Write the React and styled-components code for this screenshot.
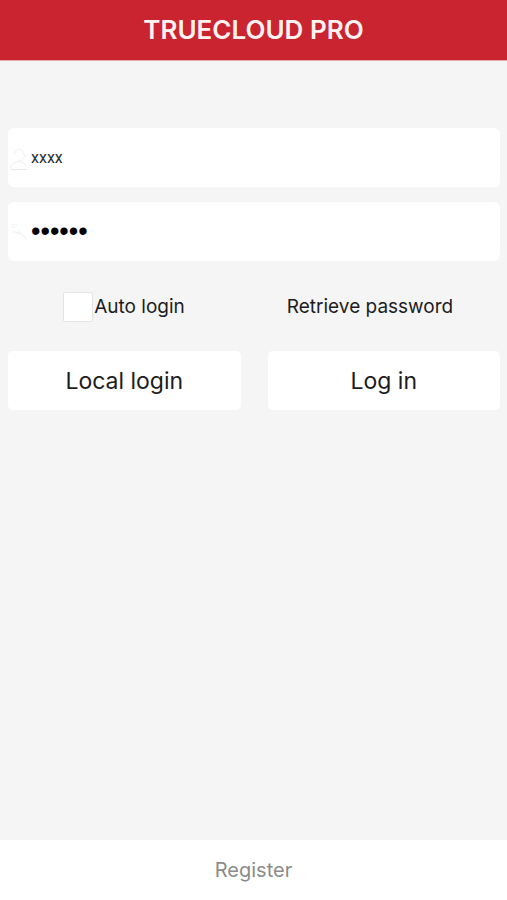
import React, { useState } from "react";
import styled, { createGlobalStyle } from "styled-components";

const GlobalStyle = createGlobalStyle`
  *, *::before, *::after { box-sizing: border-box; }
  body {
    margin: 0;
    background: #f5f5f5;
    color: #1c1c1e;
    font-family: Inter, "Liberation Sans", sans-serif;
  }
  button, input { font: inherit; color: inherit; }
`;

const Screen = styled.div`
  min-height: 100vh;
  display: flex;
  flex-direction: column;
`;

const Header = styled.header`
  height: 61px;
  display: flex;
  align-items: center;
  justify-content: center;
  background: #c92430;
  border-bottom: 1px solid #e8a9ae;
`;

const Title = styled.h1`
  margin: 0;
  color: #fff3f1;
  font-size: 26px;
  line-height: 32px;
  font-weight: 600;
`;

const Form = styled.form`
  flex: 1;
  display: flex;
  flex-direction: column;
  padding: 67px 7px 30px 8px;
`;

const Field = styled.label`
  height: 59px;
  margin-bottom: 15px;
  display: flex;
  align-items: center;
  gap: 2px;
  padding: 0 8px 0 2px;
  border-radius: 6px;
  background: #fff;

  svg { flex: none; }
`;

const Input = styled.input`
  flex: 1;
  min-width: 0;
  height: 40px;
  padding: 0;
  border: 0;
  outline: 0;
  background: transparent;
  color: #303030;
  font-family: Roboto, sans-serif;
  font-size: 16px;
`;

const PasswordInput = styled(Input)`
  color: #000;
  font-family: "Liberation Sans", sans-serif;
  font-size: 27px;
`;

const Columns = styled.div`
  display: grid;
  grid-template-columns: 1fr 1fr;
  column-gap: 27px;
  align-items: center;
`;

const Options = styled(Columns)`
  column-gap: 14px;
  padding: 16px 14px 29px 0;
  justify-items: center;
`;

const CheckLabel = styled.label`
  display: flex;
  align-items: center;
  gap: 1px;
  font-size: 19px;
  line-height: 30px;
`;

const Checkbox = styled.input`
  appearance: none;
  width: 30px;
  height: 30px;
  margin: 0;
  border: 1px solid #e4e4e4;
  border-radius: 2px;
  background: #fff;
  &:checked { background: #c92430; }
`;

const TextLink = styled.a`
  color: inherit;
  text-decoration: none;
  font-size: 19px;
  line-height: 30px;
`;

const Action = styled.button`
  height: 59px;
  border: 0;
  border-radius: 5px;
  background: #fff;
  font-size: 23px;
  line-height: 30px;
`;

const Footer = styled.footer`
  height: 60px;
  display: flex;
  align-items: center;
  justify-content: center;
  background: #fff;
`;

const RegisterLink = styled(TextLink)`
  color: #8b8b8b;
  font-size: 20px;
`;

function UserIcon() {
  return (
    <svg width="19" height="26" viewBox="0 0 19 26" fill="none" stroke="#f0f0f0" aria-hidden="true">
      <path d="M5 9.5C5 6 6.5 4 9 4s4 2 4 5l3 2-3 2c-1 2-2 2.500-4 2.500" />
      <path d="M1 24c0-4 1-6 5-7" />
      <path d="M1 24.500h16" stroke="#e8e8e8" />
      <path d="M4 18.500c3-2.500 7-2.500 10 0l2 3" />
    </svg>
  );
}

function KeyIcon() {
  return (
    <svg width="19" height="26" viewBox="0 0 19 26" fill="none" stroke="#f0f0f0" strokeLinecap="round" aria-hidden="true">
      <path d="M2 6c2-1 4-1 5-1M2 8h4" />
      <path d="M3 13c4 0 7 1 9 3l5 5" />
      <path d="M8 12c3 1 5 4 8 6" stroke="#f8f8f8" />
    </svg>
  );
}

export default function App() {
  const [user, setUser] = useState("xxxx");
  const [password, setPassword] = useState("secret");
  return (
    <Screen>
      <GlobalStyle />
      <Header>
        <Title>TRUECLOUD PRO</Title>
      </Header>
      <Form onSubmit={(e) => e.preventDefault()}>
        <Field>
          <UserIcon />
          <Input type="text" aria-label="User name" value={user} onChange={(e) => setUser(e.target.value)} />
        </Field>
        <Field>
          <KeyIcon />
          <PasswordInput type="password" aria-label="Password" value={password} onChange={(e) => setPassword(e.target.value)} />
        </Field>
        <Options>
          <CheckLabel>
            <Checkbox type="checkbox" />
            Auto login
          </CheckLabel>
          <TextLink href="#password">Retrieve password</TextLink>
        </Options>
        <Columns>
          <Action type="button">Local login</Action>
          <Action type="submit">Log in</Action>
        </Columns>
      </Form>
      <Footer>
        <RegisterLink href="#register">Register</RegisterLink>
      </Footer>
    </Screen>
  );
}
